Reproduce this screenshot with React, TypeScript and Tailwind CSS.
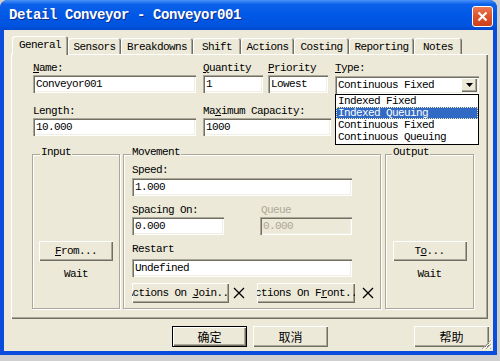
import React from "react";

const mono =
  "font-['Liberation_Mono','DejaVu_Sans_Mono',monospace] text-[11px] tracking-[-0.6px] leading-[13px] whitespace-nowrap";
const cjk = "font-['Noto_Sans_CJK_SC','Noto_Sans',sans-serif] text-[12px] leading-[14px]";
const raised =
  "bg-[#ece9d8] shadow-[inset_1px_1px_0_#ffffff,inset_-1px_-1px_0_#716f64,inset_-2px_-2px_0_#aca899]";
const sunken =
  "bg-white shadow-[inset_1px_1px_0_#aca899,inset_2px_2px_0_#716f64,inset_-1px_-1px_0_#ffffff,inset_-2px_-2px_0_#f1efe2]";
const sunkenOff =
  "bg-[#ece9d8] shadow-[inset_1px_1px_0_#aca899,inset_2px_2px_0_#716f64,inset_-1px_-1px_0_#ffffff,inset_-2px_-2px_0_#f1efe2]";
const etched = "border border-[#aca899] shadow-[inset_1px_1px_0_#ffffff,1px_1px_0_#ffffff]";

const Label = ({ children, className = "" }: { children: React.ReactNode; className?: string }) => (
  <div className={`${mono} h-[13px] ${className}`}>{children}</div>
);

const Field = ({ value, className = "", disabled = false }: { value: string; className?: string; disabled?: boolean }) => (
  <div className={`h-[18px] flex items-center pl-[3px] ${disabled ? sunkenOff : sunken} ${className}`}>
    <span className={`${mono} ${disabled ? "text-[#aca899]" : "text-black"}`}>{value}</span>
  </div>
);

const Cross = () => (
  <svg width="12" height="12" viewBox="0 0 12 12">
    <path d="M1 1 L11 11 M11 1 L1 11" stroke="#000" strokeWidth="1.3" />
  </svg>
);

const tabs = [
  { name: "General", w: "w-[56px]", active: true },
  { name: "Sensors", w: "w-[53px]" },
  { name: "Breakdowns", w: "w-[72px]" },
  { name: "Shift", w: "w-[48px]" },
  { name: "Actions", w: "w-[53px]" },
  { name: "Costing", w: "w-[55px]" },
  { name: "Reporting", w: "w-[65px]" },
  { name: "Notes", w: "w-[48px]" },
];

const types = ["Indexed Fixed", "Indexed Queuing", "Continuous Fixed", "Continuous Queuing"];

export default function App() {
  return (
    <div className="w-[500px] h-[361px] bg-[#cfcfcf] overflow-hidden text-black">
      <div className="w-[497px] h-[355px] flex flex-col bg-[#0a4ddc] rounded-t-[8px] overflow-hidden">
        {/* Title bar */}
        <div className="h-[30px] flex justify-between bg-[linear-gradient(180deg,#4a95f8_0%,#0c61ea_14%,#0058e6_50%,#0054df_85%,#0049cf_100%)]">
          <span className="pl-[9px] pt-[7px] font-['Liberation_Mono',monospace] font-bold text-[14px] tracking-[-0.4px] leading-[16px] text-white [text-shadow:1px_1px_0_#0b2f8f]">
            Detail Conveyor - Conveyor001
          </span>
          <div className="mt-[6px] mr-[4px] w-[21px] h-[21px] rounded-[3px] border border-white flex items-center justify-center bg-[linear-gradient(180deg,#e97a55_0%,#e0552b_45%,#cc3f1c_100%)]">
            <svg width="11" height="11" viewBox="0 0 11 11">
              <path d="M1.5 1.5 L9.5 9.5 M9.5 1.5 L1.5 9.5" stroke="#fff" strokeWidth="2.2" />
            </svg>
          </div>
        </div>

        {/* Client */}
        <div className="relative mx-[4px] mb-[4px] flex-1 bg-[#ece9d8] pt-[6px]">
          {/* Tabs */}
          <div className="flex items-end h-[18px] ml-[8px]">
            {tabs.map((t) =>
              t.active ? (
                <div
                  key={t.name}
                  className={`relative z-10 ${t.w} h-[19px] mb-[-1px] rounded-t-[3px] bg-[#ece9d8] flex items-start justify-center pt-[3px] shadow-[inset_1px_1px_0_#ffffff,inset_-1px_0_0_#716f64,inset_-2px_0_0_#aca899]`}
                >
                  <span className={mono}>{t.name}</span>
                </div>
              ) : (
                <div
                  key={t.name}
                  className={`${t.w} h-[16px] rounded-t-[3px] bg-[#ece9d8] flex items-start justify-center pt-[3px] shadow-[inset_1px_1px_0_#ffffff,inset_-1px_0_0_#716f64,inset_-2px_0_0_#aca899]`}
                >
                  <span className={mono}>{t.name}</span>
                </div>
              )
            )}
          </div>

          {/* Tab panel */}
          <div className="relative ml-[7px] w-[477px] h-[265px] pl-[21px] pt-[8px] bg-[#ece9d8] shadow-[inset_1px_1px_0_#ffffff,inset_-1px_-1px_0_#716f64,inset_-2px_-2px_0_#aca899]">
            <div className="flex ml-[1px]">
              <div className="w-[163px]">
                <Label>
                  <u>N</u>ame:
                </Label>
                <Field value="Conveyor001" className="w-[163px]" />
              </div>
              <div className="ml-[7px] w-[60px]">
                <Label>
                  <u>Q</u>uantity
                </Label>
                <Field value="1" className="w-[60px]" />
              </div>
              <div className="ml-[5px] w-[60px]">
                <Label>
                  <u>P</u>riority
                </Label>
                <Field value="Lowest" className="w-[60px]" />
              </div>
              <div className="relative ml-[7px] w-[144px]">
                <Label>
                  <u>T</u>ype:
                </Label>
                <div className={`relative mt-[1px] h-[18px] w-[144px] flex items-center pl-[3px] ${sunken}`}>
                  <span className={mono}>Continuous Fixed</span>
                  <div className={`absolute right-[2px] top-[2px] w-[16px] h-[14px] flex items-center justify-center ${raised}`}>
                    <svg width="7" height="4" viewBox="0 0 7 4">
                      <path d="M0 0 H7 L3.5 4 Z" fill="#000" />
                    </svg>
                  </div>
                </div>
                <div className="absolute z-20 top-[32px] left-0 w-[144px] h-[51px] border border-black bg-white">
                  {types.map((t) => (
                    <div
                      key={t}
                      className={`h-[12px] flex items-center pl-[2px] ${
                        t === "Indexed Queuing"
                          ? "bg-[#316ac5] text-white outline-1 outline-dotted outline-[#f4e9a8] -outline-offset-1"
                          : "text-black"
                      }`}
                    >
                      <span className={`${mono} leading-[12px]`}>{t}</span>
                    </div>
                  ))}
                </div>
              </div>
            </div>

            <div className="flex ml-[1px] mt-[11px]">
              <div className="w-[163px]">
                <Label>Length:</Label>
                <Field value="10.000" className="w-[163px]" />
              </div>
              <div className="ml-[7px]">
                <Label>
                  Ma<u>x</u>imum Capacity:
                </Label>
                <Field value="1000" className="w-[128px]" />
              </div>
            </div>

            {/* Groups */}
            <div className="flex mt-[18px]">
              <div className={`relative w-[88px] h-[155px] ${etched} flex flex-col items-center pt-[86px]`}>
                <span className={`absolute top-[-9px] left-[7px] px-[1px] bg-[#ece9d8] ${mono}`}>Input</span>
                <div className={`w-[74px] h-[20px] flex items-center justify-center ${raised}`}>
                  <span className={mono}>
                    <u>F</u>rom...
                  </span>
                </div>
                <span className={`${mono} mt-[7px]`}>Wait</span>
              </div>

              <div className={`relative ml-[3px] w-[258px] h-[155px] ${etched} pl-[8px] pt-[9px]`}>
                <span className={`absolute top-[-9px] left-[7px] px-[1px] bg-[#ece9d8] ${mono}`}>Movement</span>
                <Label>Speed:</Label>
                <Field value="1.000" className="w-[220px] mt-[1px]" />
                <div className="flex mt-[8px]">
                  <div className="w-[92px]">
                    <Label>Spacing On:</Label>
                    <Field value="0.000" className="w-[92px]" />
                  </div>
                  <div className="ml-[36px] w-[92px]">
                    <Label className="text-[#aca899] pl-[1px]">Queue</Label>
                    <Field value="0.000" className="w-[92px]" disabled />
                  </div>
                </div>
                <Label className="mt-[8px]">Restart</Label>
                <Field value="Undefined" className="w-[220px] mt-[3px]" />
                <div className="flex items-center mt-[6px]">
                  <div className={`w-[97px] h-[20px] flex items-center justify-center overflow-hidden ${raised}`}>
                    <span className={`${mono} shrink-0`}>
                      Actions On <u>J</u>oin...
                    </span>
                  </div>
                  <div className="ml-[4px]">
                    <Cross />
                  </div>
                  <div className={`ml-[12px] w-[98px] h-[20px] flex items-center justify-center overflow-hidden ${raised}`}>
                    <span className={`${mono} shrink-0`}>
                      Actions On F<u>r</u>ont...
                    </span>
                  </div>
                  <div className="ml-[7px]">
                    <Cross />
                  </div>
                </div>
              </div>

              <div className={`relative ml-[4px] w-[89px] h-[155px] ${etched} flex flex-col items-center pt-[86px]`}>
                <span className={`absolute top-[-9px] left-[6px] px-[1px] bg-[#ece9d8] ${mono}`}>Output</span>
                <div className={`w-[74px] h-[20px] flex items-center justify-center ${raised}`}>
                  <span className={mono}>
                    T<u>o</u>...
                  </span>
                </div>
                <span className={`${mono} mt-[7px]`}>Wait</span>
              </div>
            </div>
          </div>

          {/* Dialog buttons */}
          <div className="flex mt-[7px] ml-[168px]">
            <div className="w-[75px] h-[21px] border border-black">
              <div className={`w-full h-full flex items-center justify-center ${raised}`}>
                <span className={cjk}>确定</span>
              </div>
            </div>
            <div className={`ml-[6px] w-[75px] h-[21px] flex items-center justify-center ${raised}`}>
              <span className={cjk}>取消</span>
            </div>
            <div className={`ml-[86px] w-[75px] h-[21px] flex items-center justify-center ${raised}`}>
              <span className={cjk}>帮助</span>
            </div>
          </div>

          {/* Size grip */}
          <svg className="absolute right-[1px] bottom-[1px]" width="11" height="11" viewBox="0 0 11 11">
            <path d="M10 1 L1 10 M10 5 L5 10 M10 9 L9 10" stroke="#aca899" strokeWidth="1" />
            <path d="M11 2 L2 11 M11 6 L6 11" stroke="#ffffff" strokeWidth="1" />
          </svg>
        </div>
      </div>
    </div>
  );
}
